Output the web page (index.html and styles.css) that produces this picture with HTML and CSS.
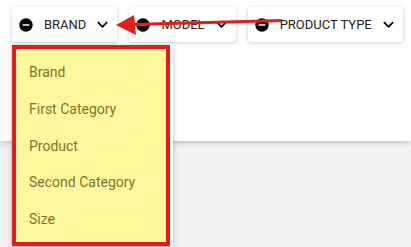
FILE: index.html
```html
<html>
 <head>
  <link rel="stylesheet" href="styles.css">
 </head>
<body>
 <div class="top">
  <div class="toolbar">
   <div class="chip">
    <svg class="minus" viewBox="0 0 24 24"><path d="M12 2C6.48 2 2 6.48 2 12s4.48 10 10 10 10-4.48 10-10S17.52 2 12 2zm5 11H7v-2h10v2z"/></svg>
    <span class="label">BRAND</span>
    <svg class="chev" viewBox="0 0 24 24"><path d="M16.59 8.59L12 13.17 7.41 8.59 6 10l6 6 6-6z"/></svg>
   </div>
   <div class="chip">
    <svg class="minus" viewBox="0 0 24 24"><path d="M12 2C6.48 2 2 6.48 2 12s4.48 10 10 10 10-4.48 10-10S17.52 2 12 2zm5 11H7v-2h10v2z"/></svg>
    <span class="label">MODEL</span>
    <svg class="chev" viewBox="0 0 24 24"><path d="M16.59 8.59L12 13.17 7.41 8.59 6 10l6 6 6-6z"/></svg>
   </div>
   <div class="chip">
    <svg class="minus" viewBox="0 0 24 24"><path d="M12 2C6.48 2 2 6.48 2 12s4.48 10 10 10 10-4.48 10-10S17.52 2 12 2zm5 11H7v-2h10v2z"/></svg>
    <span class="label">PRODUCT TYPE</span>
    <svg class="chev" viewBox="0 0 24 24"><path d="M16.59 8.59L12 13.17 7.41 8.59 6 10l6 6 6-6z"/></svg>
   </div>
  </div>
 </div>
 <div class="rest"></div>

 <!-- dropdown under BRAND -->
 <div class="menu">
  <ul class="hilite">
   <li>Brand</li>
   <li>First Category</li>
   <li>Product</li>
   <li>Second Category</li>
   <li>Size</li>
  </ul>
 </div>

 <!-- annotation arrow -->
 <svg class="arrow" viewBox="0 0 411 60">
  <line x1="132" y1="24.5" x2="282" y2="20.5" stroke="#e31b1b" stroke-width="3"/>
  <polygon points="116,25 134,15 136,35" fill="#e31b1b"/>
 </svg>
</body>
</html>
```

FILE: styles.css
```css
body {
      margin: 0;
      background: #f2f2f2;
      font-family: Roboto, "Liberation Sans", sans-serif;
      overflow: hidden;
     }

.top {
      height: 141px;
      background: #fff;
      box-shadow: 0 1px 6px rgba(0,0,0,0.25);
      position: relative;
     }

.toolbar {
          display: flex;
          gap: 12px;
          padding: 7px 12px 0 12px;
         }

.chip {
       display: flex;
       flex-shrink: 0;
       align-items: center;
       height: 35px;
       padding: 0 4px 0 6px;
       background: #fff;
       border-radius: 3px;
       box-shadow: 0 1px 4px rgba(0,0,0,0.2);
       color: #212121;
       font-size: 13px;
       white-space: nowrap;
      }

.minus {
        width: 16px;
        height: 16px;
        margin-right: 10px;
       }

.chev {
       width: 21px;
       height: 21px;
       margin-left: 6px;
      }

.menu {
       position: absolute;
       left: 12px;
       top: 45px;
       width: 161px;
       height: 201px;
       background: #fff;
       box-shadow: 0 2px 6px rgba(0,0,0,0.25);
      }

.hilite {
         margin: 0;
         width: 158px;
         height: 201px;
         box-sizing: border-box;
         padding: 5px 0 0 13px;
         list-style-type: none;
         background: #fff79d;
         border: 4px solid #e31b1b;
         color: #7b7730;
         font-size: 14px;
        }

.hilite li {
            height: 36.75px;
            line-height: 36.75px;
           }

.arrow {
        position: absolute;
        left: 0;
        top: 0;
        width: 411px;
        height: 60px;
       }
```
